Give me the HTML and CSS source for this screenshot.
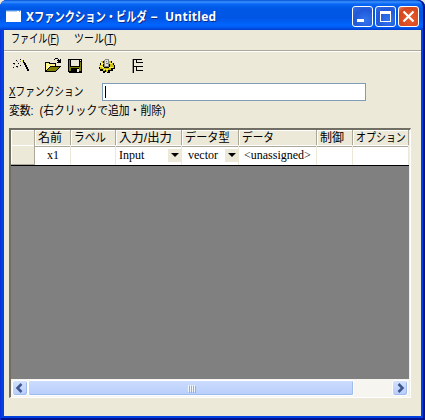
FILE: index.html
```html
<!DOCTYPE html>
<html lang="ja">
<head>
<meta charset="utf-8">
<title>Xファンクション・ビルダ</title>
<link rel="stylesheet" href="styles.css">
</head>
<body>
<div class="window">
  <header class="titlebar">
    <svg class="app-icon" width="15" height="12" viewBox="0 0 15 12" shape-rendering="crispEdges"><path fill="#fff" d="M0 0h15v12H0z"/><path fill="#4b91e8" d="M0 0h15v1H0z"/><path fill="#b7d1f3" d="M0 1h11v1H0z"/><path fill="#ef9a69" d="M13 1h1v1h-1z"/></svg>
    <h1><span class="t-title">Xファンクション・ビルダ</span><span class="t-dash">−</span><span class="t-name">Untitled</span></h1>
    <div class="controls">
      <button class="ctl"><svg width="19" height="19" viewBox="0 0 19 19" shape-rendering="crispEdges"><path fill="#fff" d="M4 12h7v3H4z"/></svg></button>
      <button class="ctl"><svg width="19" height="19" viewBox="0 0 19 19" shape-rendering="crispEdges"><path fill="#fff" fill-rule="evenodd" d="M4 4h11v11H4zM5 7v7h9V7z"/></svg></button>
      <button class="ctl close"><svg width="19" height="19" viewBox="0 0 19 19"><path stroke="#fff" stroke-width="2.2" d="M4.5 4.5l10 10M14.500 4.500l-10 10"/></svg></button>
    </div>
  </header>
  <main>
    <nav class="menu"><span class="t-file">ファイル(<u>F</u>)</span><span class="t-tool">ツール(<u>T</u>)</span></nav>
    <div class="toolbar">
      <svg width="22" height="18" viewBox="0 0 22 18" shape-rendering="crispEdges"><path d="M10 3h2v2h-2zM11 5h2v2h-2zM12 6h2v2h-2zM13 8h2v2h-2zM14 10h2v2h-2zM15 12h2v2h-2zM4 3h1v1H4zM8 2h1v1H8zM1 6h2v1H1zM6 6h1v1H6zM4 9h2v1H4zM1 10h1v1H1zM8 8h1v1H8z"/><path fill="#e9df37" d="M10 3h1v2h-1zM11 6h1v1h-1z"/><path fill="#8a887c" d="M5 4h1v1H5zM8 4h1v1H8zM2 7h1v1H2zM5 10h1v1H5z"/></svg>
      <svg class="i-open" width="17" height="18" viewBox="0 0 17 18" shape-rendering="crispEdges"><path d="M0 5h5v1h6v3h5v1h-1v1h-1v1h-1v1h-1v1h-1v1H0zM9 2h1V1h3v1h-3v1H9zM13 2h1v1h1V2h1v4h-4V5h1V4h-1V3h1z"/><path fill="#fff681" d="M1 6h3v1h6v2H5v1H4v1H3v1H2v1H1z"/><path fill="#fff" d="M2 7h1v1H2zM4 7h1v1H4zM6 8h1v1H6zM3 9h1v1H3zM8 8h1v1H8z"/><path fill="#808000" d="M5 10h9v1h-1v1h-1v1h-1v1H2v-1h1v-1h1v-1h1z"/></svg>
      <svg class="i-save" width="15" height="18" viewBox="0 0 15 18" shape-rendering="crispEdges"><path d="M0 2h14v14H1v-1H0z"/><path fill="#808000" d="M1 3h1v7h10V5h1v9H1z"/><path fill="#ece9d8" d="M3 3h8v6H3zM12 3h1v1h-1z"/><path d="M3 11h8v4H3z"/><path fill="#ece9d8" d="M9 12h2v3H9z"/></svg>
      <svg class="i-gear" width="18" height="18" viewBox="0 0 18 18" shape-rendering="crispEdges"><path d="M4 4h2v1h5V4h3v2h2v2h1v4h-2v2h-3v2H9v-1H7v1H5v-2H2v-2H1V8h1V6h2z"/><path fill="#c9bd10" d="M3 4h2v2h6V4h2v2h2v2h1v3h-3v2h-3v2H8v-2H7v1H5v-2H2v-2H1V8h2V6h1z"/><path fill="#fff34e" d="M3 6h2v2H3zM1 9h4v1H1zM4 10h2v1H4zM8 12h2v1H8zM11 10h4v1h-4zM12 6h2v1h-2zM6 12h1v1H6z"/><path d="M5 7h1v3H5zM11 7h1v3h-1zM6 10h5v1H6z"/><path fill="#8c8c86" d="M6 3h1V2h4v8H6z"/><path fill="#dedede" d="M7 3h3v6H7z"/><path fill="#77776f" d="M8 4h1v1H8zM8 6h2v1H8z"/></svg>
      <svg class="i-tree" width="14" height="18" viewBox="0 0 14 18" shape-rendering="crispEdges"><path fill="#99978d" d="M0 2h1v14H0z"/><path d="M1 2h1v14H1zM1 2h9v1H1zM4 2h1v4H4zM4 5h7v1H4zM1 9h10v1H1zM4 9h1v5H4zM4 13h7v1H4z"/></svg>
    </div>
    <div class="field"><label><span class="t-func"><u>X</u>ファンクション</span></label><div class="input"><i></i></div></div>
    <div class="vars"><span class="t-vars">変数:&nbsp;&nbsp;(右クリックで追加・削除)</span></div>
    <section class="grid">
      <div class="row head">
        <div></div><div><span class="t-han">名前</span></div><div><span class="t-label">ラベル</span></div><div><span class="t-io">入力/出力</span></div><div><span class="t-type">データ型</span></div><div><span class="t-data">データ</span></div><div><span class="t-han">制御</span></div><div><span class="t-opt">オプション</span></div>
      </div>
      <div class="row body">
        <div class="rowhead"></div><div class="center"><span>x1</span></div><div></div><div><span class="t-input">Input</span><b class="drop"></b></div><div class="vec"><span class="t-vector">vector</span><b class="drop"></b></div><div class="una"><span class="t-una">&lt;unassigned&gt;</span></div><div></div><div></div>
      </div>
      <div class="empty"></div>
      <div class="scroll">
        <div class="arrow"><svg width="14" height="14" viewBox="0 0 14 14"><path fill="none" stroke="#40578b" stroke-width="2.500" d="M8.500 3L4.500 7l4 4"/></svg></div>
        <div class="thumb"><i></i><i></i><i></i><i></i></div>
        <div class="arrow end"><svg width="14" height="14" viewBox="0 0 14 14"><path fill="none" stroke="#40578b" stroke-width="2.500" d="M5.500 3l4 4-4 4"/></svg></div>
      </div>
    </section>
  </main>
</div>
</body>
</html>
```
FILE: styles.css
```css
* { box-sizing: border-box; }
body { margin: 0; background: #ece9d8; overflow: hidden; }
.window { width: 425px; height: 420px; padding: 0 4px 4px; background: #0041df; border-radius: 7px 7px 0 0; box-shadow: inset 1px 0 #0831d9, inset -2px -2px #00138c; font: 12px/16px "Liberation Sans", "Noto Sans CJK JP", sans-serif; color: #000; }
span { display: inline-block; white-space: nowrap; transform-origin: left center; flex: none; }
u { text-underline-offset: 1px; text-decoration-thickness: 1px; }
.titlebar { height: 30px; margin: 0 -4px; padding: 0 6px 0 6px; display: flex; align-items: center; border-radius: 7px 7px 0 0; background: linear-gradient(#0050d8 0, #3c91ff 2px, #0868f5 4px, #0058e6 8px, #0055e5 18px, #0066ff 25px, #005df4 27px, #003dcc 30px); box-shadow: inset -2px 0 #00138c; }
.app-icon { margin-top: 1px; }
h1 { margin: 3px 0 0 5px; width: 200px; display: flex; font: bold 12px/18px "DejaVu Sans", "Noto Sans CJK JP", sans-serif; color: #fff; text-shadow: 1px 1px #0a2a8c; }
.t-title { width: 124px; transform: scaleX(.79); font-size: 13px; }
.t-dash { width: 15px; transform: scaleX(.8); }
.t-name { font-family: "Open Sans", sans-serif; letter-spacing: .25px; }
.controls { display: flex; gap: 2px; margin: 3px 0 0 auto; }
.ctl { width: 21px; height: 21px; padding: 0; border: 1px solid #fff; border-radius: 3px; background: radial-gradient(circle at 65% 70%, #3275ee, #2158d8 60%, #376dde); }
.ctl svg { display: block; }
.ctl.close { background: radial-gradient(circle at 60% 65%, #e95b2e, #d5461c 70%, #e88165); }
main { height: 386px; background: #ece9d8; }
.menu { height: 22px; padding: 1px 7px 0; display: flex; border-bottom: 1px solid #fff; box-shadow: inset 0 -1px #aca899; }
.t-file { width: 63px; transform: scaleX(.76); }
.t-tool { transform: scaleX(.83); }
.toolbar { height: 30px; padding: 5px 0 0 8px; display: flex; }
.i-open { margin-left: 11px; }
.i-save { margin-left: 6px; }
.i-gear { margin-left: 15px; }
.i-tree { margin-left: 16px; }
.field { height: 19px; margin: 0 0 0 5px; display: flex; align-items: center; }
label { width: 93px; }
.t-func { transform: scaleX(.81); }
.input { width: 264px; height: 18px; border: 1px solid #7f9db9; background: #fff; padding: 2px; }
.input i { display: block; width: 1px; height: 12px; background: #000; }
.vars { height: 27px; margin-left: 5px; padding-top: 2px; }
.t-vars { transform: scaleX(.9); }
.grid { width: 402px; height: 270px; margin-left: 5px; border: solid; border-width: 2px 1px 1px 2px; border-color: #716f64 #fff #fff #716f64; box-shadow: inset -1px 0 #f1efe2; padding-right: 1px; }
.row { display: grid; grid-template-columns: 24px 36px 45px 66px 57px 78px 36px 56px; }
.row > div { display: flex; align-items: center; padding-left: 3px; border-right: 1px solid #ece9d8; min-width: 0; }
.head { height: 15px; background: #ece9d8; }
.head > div { border-right-color: #aca899; border-bottom: 1px solid #aca899; box-shadow: inset 1px 1px #fff; }
.t-label { transform: scaleX(.89); }
.t-io { transform: scaleX(1.03); }
.t-type { transform: scaleX(.93); }
.t-data { transform: scaleX(.89); }
.t-opt { transform: scaleX(.83); }
.body { height: 21px; background: #fff; border-bottom: 1px solid #000; font-family: "Liberation Serif", serif; font-size: 12px; }
.row .rowhead { background: #ece9d8; border-right-color: #aca899; border-bottom: 1px solid #aca899; box-shadow: inset 1px 1px #fff; }
.row .center { padding-left: 12px; }
.row .vec { padding-left: 6px; }
.row .una { padding-left: 5px; }
.drop { width: 13px; height: 13px; margin: 0 0 0 auto; background: #ece9d8; display: grid; place-items: center; }
.drop::after { content: ""; border: 4px solid transparent; border-top-color: #000; border-bottom: 0; }
.empty { height: 213px; background: #808080; }
.scroll { height: 18px; display: flex; background: #f6f5f0; padding: 1px 1px 0; }
.arrow { width: 16px; height: 16px; flex: none; border: 1px solid #fff; border-radius: 3px; background: linear-gradient(#d4e1fe, #b7cdfb); box-shadow: inset -1px -1px #9ebcec; }
.arrow svg { display: block; }
.end { margin-left: auto; }
.thumb { width: 326px; height: 16px; border: 1px solid #fff; border-radius: 2px; background: linear-gradient(#cbdbfd, #b8cefa); box-shadow: inset -1px -1px #9ebcec; display: flex; align-items: center; justify-content: center; gap: 1px; }
.thumb i { width: 1px; height: 7px; background: #eef4fe; box-shadow: 1px 1px #8cb0f8; }
```
